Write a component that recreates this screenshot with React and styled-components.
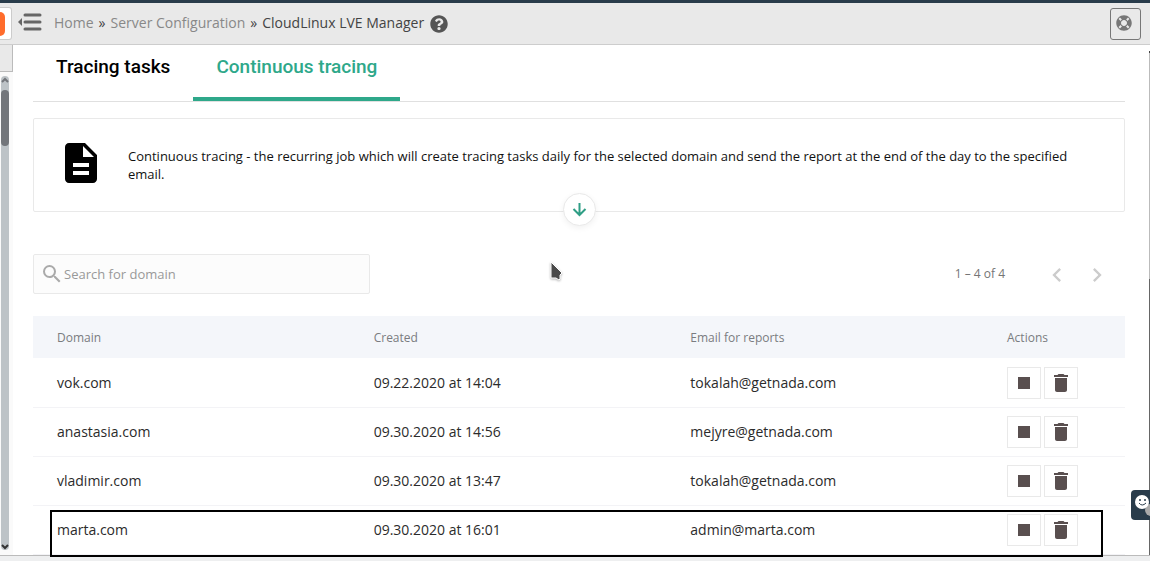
import React from "react";
import styled, { createGlobalStyle } from "styled-components";
import { FaQuestionCircle, FaLifeRing } from "react-icons/fa";

const GlobalStyle = createGlobalStyle`
  *, *::before, *::after { box-sizing: border-box; }
  body {
    margin: 0;
    background: #eeeff0;
    color: #333;
    font-family: "Open Sans", "Noto Sans", sans-serif;
    font-size: 14px;
    line-height: 20px;
  }
  svg { display: block; }
`;

const Page = styled.div`
  display: flex;
  flex-direction: column;
  min-height: 100vh;
`;

const TopBar = styled.header`
  display: flex;
  align-items: center;
  height: 45px;
  border-top: 3px solid #293c4b;
  border-bottom: 1px solid #cdcdcd;
  padding-right: 9px;
  background: #e9e9e9;
`;

const Brand = styled.a`
  display: flex;
  align-items: center;
  width: 12px;
  height: 33px;
  border: 1px solid #ccc;
  border-left: 0;
  border-radius: 0 3px 3px 0;
  background: #fff;
  &::before {
    content: "";
    width: 5px;
    height: 24px;
    border-radius: 0 5px 5px 0;
    background: #ff6c2c;
  }
`;

const MenuToggle = styled.button`
  margin: 0 12px 0 6px;
  padding: 0 0 4px;
  border: 0;
  background: none;
  color: #666;
`;

const Breadcrumbs = styled.nav`
  display: flex;
  flex: 1;
  align-items: center;
  gap: 5px;
  padding-bottom: 2px;
  white-space: nowrap;
  color: #444;
`;

const Crumb = styled.a`
  color: #888;
  text-decoration: none;
`;

const HelpLink = styled.a`
  color: #555;
  padding: 2px 0 0 1px;
`;

const SupportButton = styled.button`
  display: flex;
  align-items: center;
  justify-content: center;
  width: 31px;
  height: 32px;
  padding: 0 3px 2px 0;
  border: 1px solid #777;
  border-radius: 3px;
  background: #e9e9e9;
  color: #777;
`;

const Body = styled.div`
  display: flex;
  flex: 1;
  border-bottom: 1px solid #bbb;
  margin-bottom: 5px;
  background: #fff;
`;

const Rail = styled.aside`
  display: flex;
  flex-direction: column;
  width: 13px;
  background: #fafafa;
`;

const RailHead = styled.div`
  height: 27px;
  border-right: 1px solid #bbb;
  border-bottom: 1px solid #bbb;
  background: #e9e9e9;
`;

const ScrollTrack = styled.div`
  display: flex;
  flex: 1;
  flex-direction: column;
  align-items: center;
  width: 8px;
  margin: 4px 0 5px 1px;
  border-radius: 4px;
  background: #bdc3c7;
`;

const ScrollThumb = styled.div`
  width: 8px;
  height: 56px;
  margin: 4px 0 auto;
  border-radius: 4px;
  background: #73767b;
`;

const Main = styled.main`
  flex: 1;
  min-width: 0;
  padding: 0 24px 0 20px;
`;

const EdgeScroll = styled.div`
  width: 1px;
  margin: 6px 0 0;
  border-top: 2px solid #444;
  background: linear-gradient(#bbb 0 226px, #666 226px);
`;

const Tabs = styled.div`
  display: flex;
  border-bottom: 1px solid #e0e0e0;
`;

const Tab = styled.button`
  height: 56px;
  padding: 0 23px 8px;
  border: 0;
  border-bottom: 4px solid ${(p) => (p.$active ? "#2ea88a" : "transparent")};
  background: none;
  color: ${(p) => (p.$active ? "#2ea88a" : "#000")};
  font: 500 19px/44px Roboto, sans-serif;
`;

const InfoCard = styled.section`
  position: relative;
  display: flex;
  gap: 23px;
  margin-top: 16px;
  padding: 20px 23px 24px;
  border: 1px solid #e9e9e9;
  border-radius: 2px;
`;

const InfoText = styled.p`
  flex: 1;
  margin: 0;
  padding-top: 8px;
  color: #111;
  font-size: 13px;
  line-height: 18px;
`;

const ExpandButton = styled.button`
  position: absolute;
  bottom: -15px;
  left: calc(50% - 16px);
  display: flex;
  align-items: center;
  justify-content: center;
  width: 33px;
  height: 33px;
  padding: 0;
  border: 1px solid #e9e9e9;
  border-radius: 50%;
  background: #fff;
  box-shadow: 0 2px 6px rgba(0, 0, 0, 0.06);
  color: #2f9e85;
`;

const Toolbar = styled.div`
  display: flex;
  align-items: center;
  justify-content: space-between;
  margin: 42px 0 22px;
`;

const SearchField = styled.label`
  display: flex;
  align-items: center;
  width: 337px;
  height: 40px;
  padding-left: 6px;
  border: 1px solid #e9e9e9;
  border-radius: 2px;
  background: #fcfcfc;
  color: #aaa;
`;

const SearchInput = styled.input`
  flex: 1;
  min-width: 0;
  padding: 0;
  border: 0;
  outline: 0;
  background: none;
  color: #333;
  font: 13px/18px "Open Sans", "Noto Sans", sans-serif;
  &::placeholder { color: #999; opacity: 1; }
`;

const Pager = styled.div`
  display: flex;
  align-items: center;
  padding-right: 8px;
  color: #757575;
  font-size: 12px;
`;

const PageRange = styled.span`
  margin-right: 32px;
`;

const PageButton = styled.button`
  display: flex;
  align-items: center;
  justify-content: center;
  width: 40px;
  height: 40px;
  padding: 2px 0 0;
  border: 0;
  background: none;
  color: #ccc;
`;

const TableArea = styled.div`
  position: relative;
`;

const Table = styled.table`
  width: 100%;
  border-spacing: 0;
  table-layout: fixed;
`;

const HeadCell = styled.th`
  width: ${(p) => p.$width};
  height: 43px;
  padding: 2px 0 0 24px;
  border-bottom: 1px solid #fff;
  background: #f4f6fa;
  color: #7a7c80;
  font-size: 12px;
  font-weight: 400;
  text-align: left;
`;

const Cell = styled.td`
  height: 49px;
  padding: 8px 0 8px 24px;
  border-bottom: 1px solid #f3f3f6;
  color: #2b2b2b;
`;

const Actions = styled.div`
  display: flex;
  gap: 3px;
`;

const ActionButton = styled.button`
  display: flex;
  align-items: center;
  justify-content: center;
  width: 34px;
  height: 32px;
  padding: 0;
  border: 1px solid #e9e9e9;
  background: #fff;
  color: #594f4f;
`;

const Highlight = styled.div`
  position: absolute;
  right: 22px;
  bottom: -2px;
  left: 17px;
  height: 47px;
  border: 2px solid #000;
  pointer-events: none;
`;

const Pointer = styled.svg`
  position: absolute;
  top: 260px;
  left: 549px;
  pointer-events: none;
  filter: drop-shadow(0 1px 1px rgba(0, 0, 0, 0.3));
`;

const FeedbackButton = styled.button`
  position: fixed;
  top: 490px;
  right: 0;
  width: 19px;
  height: 30px;
  padding: 0;
  border: 0;
  border-radius: 4px 0 0 4px;
  background: #293c4b;
  overflow: hidden;
`;

function Icon({ size = 24, d, ...rest }) {
  return (
    <svg width={size} height={size} viewBox="0 0 24 24" fill="currentColor" aria-hidden="true" {...rest}>
      <path d={d} />
    </svg>
  );
}

const paths = {
  doc: "M14 2H6c-1.1 0-2 .9-2 2v16c0 1.1.9 2 2 2h12c1.1 0 2-.9 2-2V8l-6-6zm2 16H8v-2h8v2zm0-4H8v-2h8v2zm-3-5V3.500L18.500 9H13z",
  search: "M15.500 14h-.79l-.28-.27A6.471 6.471 0 0 0 16 9.500 6.500 6.500 0 1 0 9.500 16c1.610 0 3.090-.59 4.230-1.570l.27.28v.79l5 4.990L20.490 19l-4.990-5zm-6 0C7.010 14 5 11.990 5 9.500S7.010 5 9.500 5 14 7.010 14 9.500 11.990 14 9.500 14z",
  prev: "M15.410 7.410L14 6l-6 6 6 6 1.410-1.410L10.830 12z",
  next: "M10 6L8.590 7.410 13.170 12l-4.580 4.590L10 18l6-6z",
  stop: "M6 6h12v12H6z",
  trash: "M6 19c0 1.100.9 2 2 2h8c1.100 0 2-.9 2-2V7H6v12zM19 4h-3.500l-1-1h-5l-1 1H5v2h14V4z",
};

const rows = [
  ["vok.com", "09.22.2020 at 14:04", "tokalah@getnada.com"],
  ["anastasia.com", "09.30.2020 at 14:56", "mejyre@getnada.com"],
  ["vladimir.com", "09.30.2020 at 13:47", "tokalah@getnada.com"],
  ["marta.com", "09.30.2020 at 16:01", "admin@marta.com"],
];

export default function App() {
  return (
    <>
      <GlobalStyle />
      <Page>
        <TopBar>
          <Brand href="#" aria-label="Home page" />
          <MenuToggle aria-label="Toggle menu">
            <svg width="24" height="18" viewBox="0 0 24 18">
              <path d="M0 9 4 5v8z" fill="currentColor" />
              <path d="M7 2h15M7 9h15M7 16h15" stroke="currentColor" strokeWidth="3" strokeLinecap="round" />
            </svg>
          </MenuToggle>
          <Breadcrumbs aria-label="Breadcrumb">
            <Crumb href="#">Home</Crumb>
            <span>»</span>
            <Crumb href="#">Server Configuration</Crumb>
            <span>»</span>
            <span>CloudLinux LVE Manager</span>
            <HelpLink href="#" aria-label="Help">
              <FaQuestionCircle size={18} />
            </HelpLink>
          </Breadcrumbs>
          <SupportButton aria-label="Support">
            <FaLifeRing size={16} />
          </SupportButton>
        </TopBar>
        <Body>
          <Rail>
            <RailHead />
            <ScrollTrack>
              <svg width="8" height="10" viewBox="0 0 8 10" fill="none" stroke="#73767b" strokeWidth="2">
                <path d="M1 6l3-3 3 3" />
              </svg>
              <ScrollThumb />
              <svg width="8" height="10" viewBox="0 0 8 10" fill="none" stroke="#333" strokeWidth="2">
                <path d="M1 5l3 3 3-3" />
              </svg>
            </ScrollTrack>
          </Rail>
          <Main>
            <Tabs role="tablist">
              <Tab role="tab" aria-selected="false">Tracing tasks</Tab>
              <Tab role="tab" aria-selected="true" $active>Continuous tracing</Tab>
            </Tabs>
            <InfoCard>
              <Icon size={48} d={paths.doc} color="#000" />
              <InfoText>
                Continuous tracing - the recurring job which will create tracing tasks daily for the selected domain
                and send the report at the end of the day to the specified email.
              </InfoText>
              <ExpandButton aria-label="Expand">
                <svg width="15" height="15" viewBox="0 0 15 15" fill="none" stroke="currentColor" strokeWidth="2">
                  <path d="M7.500 1v12M1.500 7l6 6 6-6" />
                </svg>
              </ExpandButton>
            </InfoCard>
            <Toolbar>
              <SearchField>
                <Icon d={paths.search} />
                <SearchInput type="text" placeholder="Search for domain" aria-label="Search for domain" />
              </SearchField>
              <Pager>
                <PageRange>1 – 4 of 4</PageRange>
                <PageButton aria-label="Previous page"><Icon size={28} d={paths.prev} /></PageButton>
                <PageButton aria-label="Next page"><Icon size={28} d={paths.next} /></PageButton>
              </Pager>
            </Toolbar>
            <TableArea>
              <Table>
                <thead>
                  <tr>
                    <HeadCell $width="29%">Domain</HeadCell>
                    <HeadCell $width="29%">Created</HeadCell>
                    <HeadCell $width="29%">Email for reports</HeadCell>
                    <HeadCell $width="13%">Actions</HeadCell>
                  </tr>
                </thead>
                <tbody>
                  {rows.map(([domain, created, email]) => (
                    <tr key={domain}>
                      <Cell>{domain}</Cell>
                      <Cell>{created}</Cell>
                      <Cell>{email}</Cell>
                      <Cell>
                        <Actions>
                          <ActionButton aria-label={`Stop tracing ${domain}`}><Icon d={paths.stop} /></ActionButton>
                          <ActionButton aria-label={`Delete ${domain}`}><Icon d={paths.trash} /></ActionButton>
                        </Actions>
                      </Cell>
                    </tr>
                  ))}
                </tbody>
              </Table>
              <Highlight />
            </TableArea>
          </Main>
          <EdgeScroll />
        </Body>
      </Page>
      <Pointer width="16" height="22" viewBox="0 0 16 22">
        <path d="M2 2v16h5l3 2 1-1v-4l2-2z" fill="#4a4a4a" stroke="#fff" strokeWidth="1" />
      </Pointer>
      <FeedbackButton aria-label="Feedback">
        <svg width="19" height="30" viewBox="0 0 19 30">
          <circle cx="20" cy="20" r="6" fill="#aaa" />
          <circle cx="11" cy="12" r="7" fill="#fff" />
          <circle cx="9" cy="10" r="1" fill="#293c4b" />
          <circle cx="14" cy="10" r="1" fill="#293c4b" />
          <path d="M8 13q3 4 7 0" fill="none" stroke="#293c4b" strokeWidth="1" />
        </svg>
      </FeedbackButton>
    </>
  );
}
